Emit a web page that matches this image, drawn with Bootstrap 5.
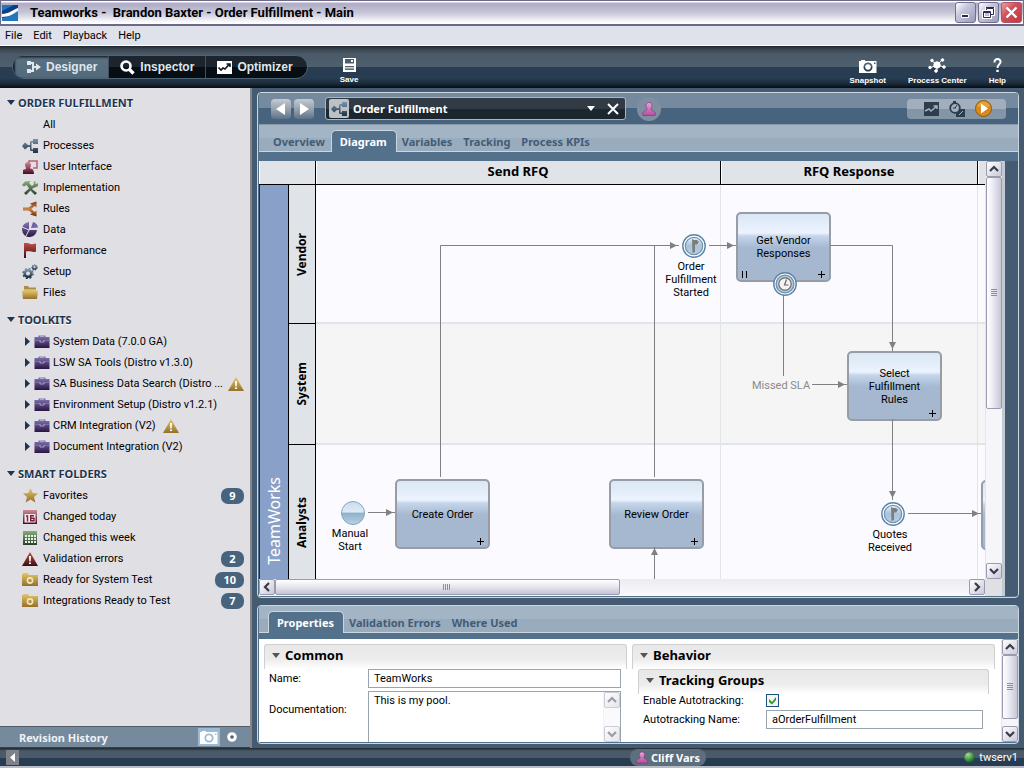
<!DOCTYPE html>
<html lang="en">
<head>
<meta charset="utf-8">
<meta name="viewport" content="width=device-width, initial-scale=1">
<title>Teamworks - Order Fulfillment</title>
<link rel="stylesheet" href="https://cdn.jsdelivr.net/npm/bootstrap@5.3.0/dist/css/bootstrap.min.css">
<style>
  :root { --ui: Roboto, "Liberation Sans", sans-serif; --strong: "Noto Sans", "Open Sans", sans-serif; --frame: #455b71; --line: #ccd6de; }
  body { font: 11px/13px var(--ui); color: #000; background: var(--frame); }
  a { color: inherit; text-decoration: none; }
  button { border: 0; padding: 0; background: none; color: inherit; }
  svg { display: block; flex: none; }
  .strong { font-family: var(--strong); font-weight: 700; }
  .fit-y { min-height: 0; }
  .fit-x { min-width: 0; }

  /* window frame */
  .titlebar { height: 26px; padding: 0 1px; border: solid #6d6a88; border-width: 1px 1px 2px 1px; background: linear-gradient(#fff 0, #fff 1px, #b0aec6 2px, #b4b2ca 5px, #c9c8d8 12px, #f4f4f8 20px, #fff 22px); }
  .titlebar h1 { font: 700 13px/20px Roboto, "Noto Sans", sans-serif; white-space: pre; }
  .winbtns { gap: 2px; }
  .winbtn { width: 21px; height: 21px; border: 1px solid #70708e; border-radius: 3px; background: linear-gradient(135deg, #fff, #c5c5da 40%, #9c9cbc); display: grid; place-items: center; }
  .winbtn.shut { border-color: #b05468; background: linear-gradient(135deg, #eaa0a0, #d05258 40%, #c0393f); }
  .menubar { height: 20px; padding: 0 5px; gap: 11px; background: #dfe1eb; border-bottom: 1px solid #fff; }

  /* toolbar */
  .toolbar { height: 42px; padding: 0 10px 0 12px; color: #fff; background: linear-gradient(#1f272d 0, #39444d 3px, #4a5a68 8px, #4e5f6d 21px, #283d51 21px, #283d51 32px, #1a2938 38px, #060b10 42px); }
  .modes { height: 24px; border: 1px solid #4d6273; border-radius: 12px; overflow: hidden; background: linear-gradient(#1c252e 50%, #060d13 50%); }
  .modes button { font: 700 12px/22px "Liberation Sans", sans-serif; height: 22px; padding: 0 11px; gap: 5px; color: #dfe6ec; border-right: 1px solid #43515e; }
  .modes button:last-child { border: 0; padding-right: 14px; }
  .modes .on { background: linear-gradient(#40515f, #5a7080 4px, #526a7b); padding-left: 14px; box-shadow: inset 2px 1px 2px #16202a; }
  .tool { font: 700 8px/9px "Liberation Sans", sans-serif; gap: 3px; }
  .tools { gap: 6px; }

  /* library tree */
  .library { width: 252px; background: #e0dfe4; border-right: 2px solid #86868a; }
  .tree { padding-top: 4px; }
  .library h2 { font: 700 11px/21px var(--strong); color: #1d3550; text-shadow: 0 1px 0 #fff; margin: 0 0 1px; padding-left: 7px; gap: 3px; }
  .library section + section { margin-top: 6px; }
  .library li { height: 21px; padding: 0 6px 0 22px; gap: 5px; white-space: nowrap; }
  .library li.kit { padding-left: 25px; gap: 3px; }
  .count { margin-left: auto; min-width: 23px; height: 16px; padding: 0 8px; border-radius: 7px; background: #48637e; color: #fff; font: 700 11px/15px var(--strong); text-align: center; }
  .history { height: 22px; padding: 0 12px 0 19px; color: #eef2f6; background: #768a9d; border-top: 1px solid #4f5a66; border-bottom: 1px solid #34404c; gap: 6px; }
  .history .cam { width: 22px; height: 18px; background: #9cbad2; display: grid; place-items: center; }

  /* panels */
  .work { padding: 4px 5px; gap: 7px; }
  .pane { border: 1px solid var(--line); border-radius: 4px; overflow: hidden; background: #53718b; padding: 0 0 1px 1px; }
  .panehead { height: 32px; padding: 0 12px; background: linear-gradient(#768a9f 15px, #48637e 15px); border-bottom: 1px solid #8798a8; gap: 11px; }
  .steps { gap: 3px; }
  .step { width: 20px; height: 20px; border-radius: 4px; background: linear-gradient(#c4cbd2, #8c9aa8 60%, #5c7288); display: grid; place-items: center; }
  .picker { width: 301px; height: 23px; padding: 0 6px 0 3px; border: 1px solid #aab5be; border-radius: 3px; color: #fff; background: linear-gradient(#313b45 50%, #1c262f 50%); gap: 4px; }
  .picker .kind { width: 20px; height: 19px; background: #bcc1c6; border-radius: 2px; display: grid; place-items: center; }
  .who { width: 24px; height: 24px; border-radius: 12px; background: #7f8fa1; display: grid; place-items: center; }
  .views { height: 20px; padding: 0 14px 0 17px; border-radius: 4px; background: linear-gradient(#a2aebb 50%, #8396a8 50%); gap: 10px; }
  .tabstrip { height: 27px; padding: 0 9px; background: linear-gradient(#a3b4c4 50%, #99acbe 50%); border-bottom: 1px solid var(--line); }
  .tabstrip a { height: 21px; padding: 0 6px 0 5px; font: 700 11px/23px var(--strong); color: #435c75; }
  .tabstrip a.active { height: 22px; margin-bottom: -1px; padding: 0 9px 0 8px; line-height: 22px; color: #fff; background: #53718b; border: 1px solid var(--line); border-bottom: 0; border-radius: 5px 5px 0 0; }

  /* scroll bars */
  .vbar { width: 17px; background: #f6f6fa; border-left: 1px solid #e4e4ee; }
  .hbar { height: 17px; background: linear-gradient(#ececf0, #fafafe); }
  .cap { width: 16px; height: 16px; border: 1px solid #9a9ab0; border-radius: 2px; background: linear-gradient(135deg, #fff, #c9c9da); display: grid; place-items: center; flex: none; }
  .thumb { border: 1px solid #9a9ab0; border-radius: 2px; display: grid; place-items: center; }
  .vbar .thumb { width: 16px; background: linear-gradient(90deg, #fff, #ececf4 40%, #c6c6d6); }
  .hbar .thumb { height: 16px; background: linear-gradient(#fff, #e6e6ef 50%, #c4c4d4); }
  .corner { padding-bottom: 17px; background: #e0dfe4; }
  .gutter { width: 16px; border-left: 3px solid #c3cad2; background: var(--frame); }
  .viewport { padding-top: 9px; }

  /* process diagram */
  .canvas { background: #fafaff; }
  .lanes { display: grid; grid-template: 24px 139px 121px 1fr / 30px 27px 405px 257px 1fr; height: 100%; }
  .phase { background: #e0e3e8; border-right: 1px solid #000; border-bottom: 1px solid #000; box-shadow: inset 1px 0 0 #fff; font: 700 13px/20px var(--strong); text-align: center; }
  .phase.blank { grid-column: span 2; }
  .pool { grid-row: span 3; background: #89a1c8; border-right: 1px solid #000; box-shadow: inset 1px 0 0 #1414e0; color: #fff; font: 16px/28px var(--strong); padding-bottom: 14px; }
  .pool span, .lane span { writing-mode: vertical-rl; transform: rotate(180deg); }
  .lane { background: #e0e3e8; border-right: 1px solid #000; border-bottom: 1px solid #000; font: 700 12px/26px var(--strong); }
  .cell { border-right: 1px solid #e0e5ea; border-bottom: 2px solid #e0e5ea; }
  .alt { background: #f5f5f5; }
  .last { border-bottom: 0; }
  .lane.last { padding-top: 20px; }
  .task, .event, .note { position: absolute; }
  .task { width: 95px; height: 70px; border: 2px solid #979ca5; border-radius: 5px; background: linear-gradient(#dbe7f5, #ebf3fe 19px, #c6d6ea 22px, #afc2da 30px, #a5b8d0 34px); text-align: center; padding: 0 10px; }
  .task .plus { position: absolute; right: 4px; bottom: 2px; }
  .task .par { position: absolute; left: 3px; bottom: 2px; }
  .note { width: 80px; text-align: center; }
  .note.dim { color: #8a8a8a; }

  /* properties */
  .props { height: 103px; margin-top: 6px; background: #fff; }
  .sheet { gap: 5px; padding: 5px 6px 0 5px; }
  .half { flex: 1 1 0; min-width: 0; }
  .grp { height: 25px; padding: 0 0 4px 7px; gap: 5px; margin: 0; background: linear-gradient(#e8e8e8 0, #ececec 14px, #fff); border: 1px solid #d0d0d0; border-bottom: 0; border-radius: 3px 3px 0 0; font: 700 13px/20px var(--strong); }
  .grp svg { color: #555; }
  .line { padding: 0 6px 3px 5px; }
  .half .line label { width: 99px; }
  .half .sub .line label { width: 123px; }
  .sub { padding: 0 6px; }
  .field { height: 19px; border: 1px solid #9aa4ae; border-radius: 0; background: #fff; font: 11px/13px var(--ui); color: #000; padding: 2px 5px; }
  .memo { height: 60px; border: 1px solid #9aa4ae; }
  .memo .field { height: 58px; border: 0; resize: none; }
  .memo .vbar { height: 50px; opacity: .5; }
  .tick { appearance: none; width: 13px; height: 13px; margin: 0; border: 1px solid #1c5180; background: #f4f4f0 url("data:image/svg+xml,%3Csvg xmlns='http://www.w3.org/2000/svg' viewBox='0 0 11 11'%3E%3Cpath d='M2 4l3 3 4-5v3L5 9.500 2 7z' fill='%2321a121'/%3E%3C/svg%3E"); }

  /* status */
  .status { height: 20px; padding: 0 6px; color: #fff; background: linear-gradient(#1e2830 0, #4a5a68 3px, #4a5a68 10px, #273c50 10px); border-bottom: 2px solid #b8bcc8; }
  .status .from { flex: 2 1 0; }
  .status .to { flex: 1 1 0; }
  .status .fold { background: #7c8287; padding: 3px 4px; }
  .status .user { height: 17px; padding: 0 6px; border-radius: 8px; background: #5d6e7d; gap: 3px; }
</style>
</head>
<body class="vh-100 d-flex flex-column overflow-hidden">

<svg width="0" height="0" class="position-absolute" aria-hidden="true">
  <defs>
    <linearGradient id="gSteel" x1="0" y1="0" x2="0" y2="1"><stop offset="0" stop-color="#7c93a8"/><stop offset="1" stop-color="#1f3346"/></linearGradient>
    <linearGradient id="gWine" x1="0" y1="0" x2="0" y2="1"><stop offset="0" stop-color="#cf8a96"/><stop offset="1" stop-color="#4a0a24"/></linearGradient>
    <linearGradient id="gGreen" x1="0" y1="0" x2="0" y2="1"><stop offset="0" stop-color="#86b078"/><stop offset="1" stop-color="#253f2c"/></linearGradient>
    <linearGradient id="gRust" x1="0" y1="0" x2="0" y2="1"><stop offset="0" stop-color="#7a3a14"/><stop offset=".5" stop-color="#cf8442"/><stop offset="1" stop-color="#6a2c0c"/></linearGradient>
    <linearGradient id="gViolet" x1="0" y1="0" x2="0" y2="1"><stop offset="0" stop-color="#8478b4"/><stop offset="1" stop-color="#2a1444"/></linearGradient>
    <linearGradient id="gRed" x1="0" y1="0" x2="0" y2="1"><stop offset="0" stop-color="#c0504a"/><stop offset="1" stop-color="#3e0e10"/></linearGradient>
    <linearGradient id="gGold" x1="0" y1="0" x2="0" y2="1"><stop offset="0" stop-color="#e4c66a"/><stop offset="1" stop-color="#94702c"/></linearGradient>
    <linearGradient id="gPink" x1="0" y1="0" x2="0" y2="1"><stop offset="0" stop-color="#f0a0d8"/><stop offset="1" stop-color="#b0509c"/></linearGradient>
    <linearGradient id="gBall" x1="0" y1="0" x2="0" y2="1"><stop offset="0" stop-color="#c8dcec"/><stop offset=".45" stop-color="#dfeaf6"/><stop offset=".52" stop-color="#8fb2cc"/><stop offset="1" stop-color="#bcd2e4"/></linearGradient>
    <linearGradient id="gRing" x1="0" y1="0" x2="0" y2="1"><stop offset="0" stop-color="#e6eff8"/><stop offset=".5" stop-color="#a9c3d9"/><stop offset="1" stop-color="#b9cfe2"/></linearGradient>
    <radialGradient id="gOrb" cx=".35" cy=".25" r=".8"><stop offset="0" stop-color="#a8dc90"/><stop offset=".6" stop-color="#3f9440"/><stop offset="1" stop-color="#1b4d22"/></radialGradient>
    <symbol id="i-proc" viewBox="0 0 16 14"><path fill="url(#gSteel)" d="M0 7l3-3.500L6 6h2V3.500Q8 2 9.500 2H11V0h5v5h-5V3.500H9.500v7H11V9h5v5h-5v-2H9.500Q8 12 8 10.500V8H6l-3 2.500z"/></symbol>
    <symbol id="i-flow" viewBox="0 0 14 12"><path fill="currentColor" d="M0 0h4v1h3v4h2V2.500L14 6 9 9.500V7H7v4H4v1H0V8h4v1h1V3H4v1H0z"/></symbol>
    <symbol id="i-cam" viewBox="0 0 18 13"><path fill="currentColor" fill-rule="evenodd" d="M0 1h2V0h4v1h11.500v12H0zM9 2.500a4.500 4.500 0 1 0 .01 0zM9 4.200a2.800 2.800 0 1 1-.01 0zM15 2.500h1.500V4H15z"/></symbol>
    <symbol id="i-user" viewBox="0 0 14 14"><path fill="url(#gPink)" stroke="#7c3470" stroke-width=".6" d="M7 .5c2 0 3 1.500 3 3.200C10 5.500 9 6 9 7.500c0 1 4 1 4.500 4.500L13 13.500H1L.5 12C1 8.500 5 8.500 5 7.500 5 6 4 5.500 4 3.700 4 2 5 .5 7 .5z"/></symbol>
    <symbol id="i-kit" viewBox="0 0 15 13"><path fill="url(#gViolet)" fill-rule="evenodd" d="M4 2V.5h7V2h4v11H0V2zM5.500 2h4v-.6h-4z"/><path d="M0 5.500h6m3 0h6" stroke="#8d82b8" stroke-width=".6"/><path d="M5.500 5v2h4V5" fill="none" stroke="#b9aed4" stroke-width=".8"/></symbol>
    <symbol id="i-tri" viewBox="0 0 6 9"><path fill="#1d3550" d="M0 0v9l5-4.500z"/></symbol>
    <symbol id="i-plus" viewBox="0 0 7 7"><path stroke="#000" d="M0 3.500h7M3.500 0v7"/></symbol>
    <symbol id="i-warn" viewBox="0 0 16 14"><path d="M8 0l8 14H0z"/><path fill="#fff" d="M7 4h2l-.3 5.500H7.300zM7 10.500h2V12H7z"/></symbol>
    <symbol id="i-folder" viewBox="0 0 16 13"><path fill="url(#gGold)" d="M0 1h1V0h5l1 2h9v11H0z"/><circle cx="8" cy="7.500" r="2.600" fill="none" stroke="#f2e6b4" stroke-width="1.600"/></symbol>
    <symbol id="i-left" viewBox="0 0 10 12"><path fill="currentColor" d="M9 0v12L0 6z"/></symbol>
    <symbol id="i-right" viewBox="0 0 10 12"><path fill="currentColor" d="M1 0v12l9-6z"/></symbol>
    <symbol id="i-down" viewBox="0 0 8 5"><path fill="currentColor" d="M0 0h8L4 5z"/></symbol>
    <symbol id="c-up" viewBox="0 0 10 10"><path d="M1 7l4-4 4 4" fill="none" stroke="#3a3a48" stroke-width="2.200"/></symbol>
    <symbol id="c-dn" viewBox="0 0 10 10"><path d="M1 3l4 4 4-4" fill="none" stroke="#3a3a48" stroke-width="2.200"/></symbol>
    <symbol id="c-lt" viewBox="0 0 10 10"><path d="M7 1L3 5l4 4" fill="none" stroke="#3a3a48" stroke-width="2.200"/></symbol>
    <symbol id="c-rt" viewBox="0 0 10 10"><path d="M3 1l4 4-4 4" fill="none" stroke="#3a3a48" stroke-width="2.200"/></symbol>
    <symbol id="e-msg" viewBox="0 0 24 24"><circle cx="12" cy="12" r="11.200" fill="#fff" stroke="#5d84a6" stroke-width="1.400"/><circle cx="12" cy="12" r="8.700" fill="url(#gRing)" stroke="#6f94b4" stroke-width="1.200"/><path fill="#7d7d7d" d="M10 5l2 1h3l2 2-2 2.500h-2V18l-2.500 1z"/></symbol>
    <symbol id="e-time" viewBox="0 0 24 24"><circle cx="12" cy="12" r="11.200" fill="#fff" stroke="#5d84a6" stroke-width="1.400"/><circle cx="12" cy="12" r="8.800" fill="#c4d8ea" stroke="#6f94b4" stroke-width="1.600"/><circle cx="12" cy="12" r="6.200" fill="#f4f4f4" stroke="#777" stroke-width="1.400"/><path d="M13.500 7.500L11.500 13H15.500" fill="none" stroke="#666" stroke-width="1.200"/></symbol>
  </defs>
</svg>

<header class="flex-shrink-0">
  <div class="titlebar d-flex align-items-center">
    <svg width="16" height="16" viewBox="0 0 16 16"><path fill="#0a3f86" d="M0 0h16v16H0z"/><path fill="#2f8fd0" d="M0 0h12L0 6zM0 16V13C6 12 11 9 16 5v11z" opacity=".7"/><path fill="#fff" d="M0 9C6 9 11 5 16 3v3c-5 3-9 6-16 6z"/></svg>
    <h1 class="m-0 ms-2 ps-1 me-auto">Teamworks -  Brandon Baxter - Order Fulfillment - Main</h1>
    <div class="winbtns d-flex">
      <button class="winbtn" aria-label="Minimize"><svg width="13" height="13"><path fill="#2c2c50" stroke="#fff" d="M2.500 8.500h7v3h-7z"/></svg></button>
      <button class="winbtn" aria-label="Restore"><svg width="13" height="13" fill="none"><path stroke="#fff" stroke-width="3" d="M4.500 5V2.500h7v6H9M1.500 5.500h7v6h-7z"/><path stroke="#2c2c50" d="M4.500 4V2.500h7v6H9M4 1.500h8M1.500 5.500h7v6h-7zM1 6.500h8"/></svg></button>
      <button class="winbtn shut" aria-label="Close"><svg width="13" height="13"><path stroke="#fff" stroke-width="2.400" d="M1.500 1.500l10 10M11.500 1.500l-10 10"/></svg></button>
    </div>
  </div>
  <nav class="menubar d-flex align-items-center">
    <a href="#">File</a><a href="#">Edit</a><a href="#">Playback</a><a href="#">Help</a>
  </nav>
  <div class="toolbar d-flex align-items-center">
    <div class="modes d-flex">
      <button class="on d-flex align-items-center"><svg width="14" height="12"><use href="#i-flow"/></svg>Designer</button>
      <button class="d-flex align-items-center"><svg width="15" height="15" viewBox="0 0 15 15" fill="none" stroke="#fff"><circle cx="6" cy="6" r="4.500" stroke-width="2.600"/><path d="M9.500 9.500l4 4" stroke-width="3.400"/></svg>Inspector</button>
      <button class="d-flex align-items-center"><svg width="15" height="13" viewBox="0 0 15 13"><path fill="#fff" d="M0 0h15v13H0z"/><path fill="none" stroke="#101820" stroke-width="1.600" d="M1.500 6.500L4 9l2-2 2 1 4.500-5M9.500 3H13v3"/></svg>Optimizer</button>
    </div>
    <button class="tool d-flex flex-column align-items-center ms-4 px-2 pt-2"><svg width="13" height="14" viewBox="0 0 13 14"><path fill="#fff" fill-rule="evenodd" d="M0 0h13v14H0zM2 1v4.500h9V1zM2 8v1.200h9V8zM2 10.500v1.200h9v-1.200z"/><path fill="#fff" d="M8 2h2v2H8z"/></svg>Save</button>
    <div class="tools d-flex ms-auto pt-2">
      <button class="tool d-flex flex-column align-items-center justify-content-end px-2"><svg width="18" height="13"><use href="#i-cam"/></svg>Snapshot</button>
      <button class="tool d-flex flex-column align-items-center justify-content-end px-2"><svg width="18" height="15" viewBox="0 0 18 15" fill="#fff" stroke="#fff"><path d="M9 7L4 3M9 7l5-5M9 7l7 2M9 7L2 10M9 7v6" stroke-width="1"/><circle cx="9" cy="7" r="3.200"/><circle cx="4" cy="2.500" r="1.300"/><circle cx="14.500" cy="2" r="1.300"/><circle cx="16" cy="9" r="1.300"/><circle cx="2" cy="9.500" r="1.300"/><circle cx="8" cy="13" r="1.300"/></svg>Process Center</button>
      <button class="tool d-flex flex-column align-items-center justify-content-end px-2"><svg width="9" height="15" viewBox="0 0 9 15"><path fill="none" stroke="#fff" stroke-width="2" d="M1.500 4.500C1 0 8 0 7.500 4c0 2-3 2.500-3 6"/><path fill="#fff" d="M3.300 11.800h2.400V14H3.300z"/></svg>Help</button>
    </div>
  </div>
</header>

<div class="d-flex flex-grow-1 fit-y">
  <aside class="library d-flex flex-column flex-shrink-0">
    <div class="tree flex-grow-1 overflow-hidden">
      <section>
        <h2 class="d-flex align-items-center"><svg width="8" height="5"><use href="#i-down"/></svg>ORDER FULFILLMENT</h2>
        <ul class="list-unstyled m-0">
          <li class="d-flex align-items-center"><svg width="16" height="14"></svg><a href="#">All</a></li>
          <li class="d-flex align-items-center"><svg width="16" height="14"><use href="#i-proc"/></svg><a href="#">Processes</a></li>
          <li class="d-flex align-items-center"><svg width="16" height="14" viewBox="0 0 16 14"><path fill="none" stroke="#b86472" stroke-width="1.600" d="M7 3V1h8v7h-4"/><path fill="url(#gWine)" d="M6 2c2 0 3 1.500 3 3S8 7.500 8 8.500c2 0 4 1 4 5.500H1V10c1-1 3-.8 3-1.500S3 6.500 3 5s1-3 3-3z"/></svg><a href="#">User Interface</a></li>
          <li class="d-flex align-items-center"><svg width="16" height="14" viewBox="0 0 16 14"><path fill="url(#gGreen)" d="M0 4l3-3.500 6-.5L7 1.500l1.500 2L10 5l2-2-.5-2L14 0l-1 2 1.200 1L16 2v3l-3 1.500-1.500.2L10 8l5 4-2 2-4.500-4.500L4 14l-2-2 5-4.500L4.500 4 2 5.500z"/></svg><a href="#">Implementation</a></li>
          <li class="d-flex align-items-center"><svg width="16" height="16" viewBox="0 0 16 16"><path fill="url(#gRust)" d="M1 6.500h5.500L10 4 8 2.500 14.500.5v6L12.500 5 9.500 8l3 3 2-1.500v6L8 13.500 10 12 6.500 9.500H1z"/></svg><a href="#">Rules</a></li>
          <li class="d-flex align-items-center"><svg width="16" height="15" viewBox="0 0 16 15"><path fill="url(#gViolet)" d="M7 7.500V0a7.500 7.500 0 1 0 8 7H8z"/><path fill="#6c62a4" d="M9 6l2-6a7 7 0 0 1 5 5.500z"/><path stroke="#e0dfe4" fill="none" d="M0 5l7 3 2-8M7 8l-3 6M7 7.500h9"/></svg><a href="#">Data</a></li>
          <li class="d-flex align-items-center"><svg width="16" height="15" viewBox="0 0 16 15"><path fill="url(#gRed)" d="M2 0h2c3-.5 4 2 7 1l3-.5v8c-3 1.500-6-1-10 0V15H2z"/></svg><a href="#">Performance</a></li>
          <li class="d-flex align-items-center"><svg width="16" height="15" viewBox="0 0 16 15" fill="none" stroke="url(#gSteel)"><circle cx="6" cy="9.500" r="3.300" stroke-width="2.600"/><circle cx="6" cy="9.500" r="4.900" stroke-width="1.600" stroke-dasharray="2 1.850"/><circle cx="12.500" cy="3.300" r="1.800" stroke-width="1.500"/><circle cx="12.500" cy="3.300" r="2.800" stroke-dasharray="1.300 1.200"/></svg><a href="#">Setup</a></li>
          <li class="d-flex align-items-center"><svg width="16" height="13" viewBox="0 0 16 13"><path fill="#ad8c42" d="M2 4V0h4l1 1.500h7V5H2z"/><path fill="#efe0a4" d="M1 3.500h14v1H1z"/><path fill="url(#gGold)" d="M0 4.500h16L15 13H1z"/></svg><a href="#">Files</a></li>
        </ul>
      </section>
      <section>
        <h2 class="d-flex align-items-center"><svg width="8" height="5"><use href="#i-down"/></svg>TOOLKITS</h2>
        <ul class="list-unstyled m-0">
          <li class="kit d-flex align-items-center"><svg width="6" height="9"><use href="#i-tri"/></svg><svg width="16" height="13"><use href="#i-kit"/></svg><a href="#">System Data (7.0.0 GA)</a></li>
          <li class="kit d-flex align-items-center"><svg width="6" height="9"><use href="#i-tri"/></svg><svg width="16" height="13"><use href="#i-kit"/></svg><a href="#">LSW SA Tools (Distro v1.3.0)</a></li>
          <li class="kit d-flex align-items-center"><svg width="6" height="9"><use href="#i-tri"/></svg><svg width="16" height="13"><use href="#i-kit"/></svg><a href="#">SA Business Data Search (Distro ...</a><svg class="ms-auto" width="16" height="14" fill="url(#gGold)"><use href="#i-warn"/></svg></li>
          <li class="kit d-flex align-items-center"><svg width="6" height="9"><use href="#i-tri"/></svg><svg width="16" height="13"><use href="#i-kit"/></svg><a href="#">Environment Setup (Distro v1.2.1)</a></li>
          <li class="kit d-flex align-items-center"><svg width="6" height="9"><use href="#i-tri"/></svg><svg width="16" height="13"><use href="#i-kit"/></svg><a href="#">CRM Integration (V2)</a><svg class="ms-1" width="16" height="14" fill="url(#gGold)"><use href="#i-warn"/></svg></li>
          <li class="kit d-flex align-items-center"><svg width="6" height="9"><use href="#i-tri"/></svg><svg width="16" height="13"><use href="#i-kit"/></svg><a href="#">Document Integration (V2)</a></li>
        </ul>
      </section>
      <section>
        <h2 class="d-flex align-items-center"><svg width="8" height="5"><use href="#i-down"/></svg>SMART FOLDERS</h2>
        <ul class="list-unstyled m-0">
          <li class="d-flex align-items-center"><svg width="16" height="15" viewBox="0 0 16 15"><path fill="url(#gGold)" d="M8.500 0l2.200 5 5.300.5-4 3.500 1.300 5.500-4.800-3-4.800 3L5 9 1 5.500 6.300 5z"/></svg><a href="#">Favorites</a><span class="count">9</span></li>
          <li class="d-flex align-items-center"><svg width="16" height="14" viewBox="0 0 16 14"><path fill="url(#gWine)" d="M1 0h14v14H1z"/><path fill="#f0e8ea" d="M2.500 4h11v8.500h-11z"/><path fill="none" stroke="#7a2038" stroke-width="1.400" d="M4 6h1.500v5.500M12 5.700H8.700v5H12V8.200H8.700"/></svg><a href="#">Changed today</a></li>
          <li class="d-flex align-items-center"><svg width="16" height="14" viewBox="0 0 16 14"><path fill="url(#gGreen)" d="M1 0h14v14H1z"/><path stroke="#e8f0e4" stroke-width="1.800" stroke-dasharray="2 1" d="M3 5h11M3 8h11M3 11h11"/></svg><a href="#">Changed this week</a></li>
          <li class="d-flex align-items-center"><svg width="16" height="14" fill="url(#gRed)"><use href="#i-warn"/></svg><a href="#">Validation errors</a><span class="count">2</span></li>
          <li class="d-flex align-items-center"><svg width="16" height="13"><use href="#i-folder"/></svg><a href="#">Ready for System Test</a><span class="count">10</span></li>
          <li class="d-flex align-items-center"><svg width="16" height="13"><use href="#i-folder"/></svg><a href="#">Integrations Ready to Test</a><span class="count">7</span></li>
        </ul>
      </section>
    </div>
    <div class="history strong d-flex align-items-center">
      <span class="me-auto">Revision History</span>
      <button class="cam text-white" aria-label="Snapshot"><svg width="18" height="13"><use href="#i-cam"/></svg></button>
      <button aria-label="Record"><svg width="12" height="12" viewBox="0 0 12 12"><circle cx="6" cy="6" r="3.300" fill="#5a5570" stroke="#fff" stroke-width="3"/></svg></button>
    </div>
  </aside>

  <main class="work d-flex flex-column flex-grow-1 fit-x">
    <section class="pane d-flex flex-column flex-grow-1 fit-y">
      <div class="panehead d-flex align-items-center">
        <div class="steps d-flex text-white">
          <button class="step" aria-label="Back"><svg width="10" height="12"><use href="#i-left"/></svg></button>
          <button class="step" aria-label="Forward"><svg width="10" height="12"><use href="#i-right"/></svg></button>
        </div>
        <div class="picker strong d-flex align-items-center">
          <span class="kind"><svg width="16" height="14"><use href="#i-proc"/></svg></span>
          <span class="me-auto">Order Fulfillment</span>
          <button aria-label="Open list"><svg width="8" height="5"><use href="#i-down"/></svg></button>
          <button class="ms-2" aria-label="Close"><svg width="12" height="12"><path stroke="#fff" stroke-width="2" d="M1 1l10 10M11 1L1 11"/></svg></button>
        </div>
        <span class="who"><svg width="14" height="14"><use href="#i-user"/></svg></span>
        <div class="views d-flex align-items-center ms-auto">
          <button aria-label="Chart"><svg width="15" height="14" viewBox="0 0 15 14"><path fill="#2c3d4e" d="M0 0h15v14H0z"/><path fill="none" stroke="#a4b2c0" stroke-width="1.500" d="M1 9l4-2 2 2 6-5M9.500 4H13v3"/></svg></button>
          <button aria-label="Timing"><svg width="16" height="16" viewBox="0 0 16 16"><path fill="#2c3d4e" d="M7 8h9v8H7zM4 0h3v3H4z"/><circle cx="6" cy="7" r="4.800" fill="#a3b0bc" stroke="#2c3d4e" stroke-width="1.800"/><path stroke="#2c3d4e" d="M6 7l2-3M4 7h3"/><path stroke="#a4b2c0" d="M10 14l4-4"/></svg></button>
          <button aria-label="Run"><svg width="17" height="17" viewBox="0 0 17 17"><circle cx="8.500" cy="8.500" r="8" fill="#d98a1e" stroke="#8c5a14"/><path fill="#f0b04c" d="M2 6c2-6 11-6 13 0-4 2-9 2-13 0z" opacity=".6"/><path fill="#fff" d="M6 3.500v10l7-5z"/></svg></button>
        </div>
      </div>
      <nav class="tabstrip d-flex align-items-end">
        <a href="#">Overview</a><a href="#" class="active">Diagram</a><a href="#">Variables</a><a href="#">Tracking</a><a href="#">Process KPIs</a>
      </nav>
      <div class="viewport d-flex flex-grow-1 fit-y">
        <div class="d-flex flex-column flex-grow-1 fit-x">
          <div class="canvas position-relative overflow-hidden flex-grow-1">
            <div class="lanes">
              <div class="phase blank"></div><div class="phase">Send RFQ</div><div class="phase">RFQ Response</div><div class="phase border-end-0"></div>
              <div class="pool d-flex align-items-end justify-content-center"><span>TeamWorks</span></div>
              <div class="lane d-flex align-items-center justify-content-center"><span>Vendor</span></div><div class="cell"></div><div class="cell"></div><div class="cell border-end-0"></div>
              <div class="lane d-flex align-items-center justify-content-center"><span>System</span></div><div class="cell alt"></div><div class="cell alt"></div><div class="cell alt border-end-0"></div>
              <div class="lane last d-flex align-items-center justify-content-center"><span>Analysts</span></div><div class="cell last"></div><div class="cell last"></div><div class="cell last border-end-0"></div>
            </div>
            <div class="task d-flex align-items-center justify-content-center" style="left:136px;top:318px">Create Order<span class="plus"><svg width="7" height="7"><use href="#i-plus"/></svg></span></div>
            <div class="task d-flex align-items-center justify-content-center" style="left:350px;top:318px">Review Order<span class="plus"><svg width="7" height="7"><use href="#i-plus"/></svg></span></div>
            <div class="task d-flex align-items-center justify-content-center" style="left:477px;top:51px">Get Vendor Responses<span class="par"><svg width="7" height="7"><path stroke="#000" d="M1.500 0v7M5.500 0v7"/></svg></span><span class="plus"><svg width="7" height="7"><use href="#i-plus"/></svg></span></div>
            <div class="task d-flex align-items-center justify-content-center" style="left:588px;top:190px">Select Fulfillment Rules<span class="plus"><svg width="7" height="7"><use href="#i-plus"/></svg></span></div>
            <div class="task" style="left:722px;top:319px"></div>
            <svg class="position-absolute top-0 start-0" width="800" height="420" fill="none">
              <path stroke="#808080" d="M181.500 316V84.500H420M395.500 84V316M395.500 420V386M450 84.500H477M571 84.500H633.500V190M524.500 134V215M553 223.500H588M633.500 258V339M649 352.500H722M109 351.500H136"/>
              <path fill="#808080" d="M411 81v7l7-3.500zM468 81v7l7-3.500zM630 181h7l-3.500 7zM579 220v7l7-3.500zM630 330h7l-3.500 7zM713 349v7l7-3.500zM127 348v7l7-3.500zM392 394h7l-3.500-7z"/>
            </svg>
            <svg class="event" style="left:423px;top:73px" width="24" height="24"><use href="#e-msg"/></svg>
            <svg class="event" style="left:514px;top:111px" width="24" height="24"><use href="#e-time"/></svg>
            <svg class="event" style="left:622px;top:341px" width="24" height="24"><use href="#e-msg"/></svg>
            <svg class="event" style="left:82px;top:340px" width="24" height="24"><circle cx="12" cy="12" r="11.500" fill="url(#gBall)" stroke="#84a6c2"/></svg>
            <div class="note" style="left:392px;top:99px">Order<br>Fulfillment<br>Started</div>
            <div class="note dim" style="left:482px;top:218px">Missed SLA</div>
            <div class="note" style="left:591px;top:367px">Quotes<br>Received</div>
            <div class="note" style="left:51px;top:366px">Manual<br>Start</div>
          </div>
          <div class="hbar d-flex">
            <button class="cap" aria-label="Scroll left"><svg width="10" height="10"><use href="#c-lt"/></svg></button>
            <div class="thumb" style="width:47.500%"><svg width="8" height="6"><path stroke="#8c8ca4" d="M.5 0v6M2.500 0v6M4.500 0v6M6.500 0v6"/></svg></div>
            <button class="cap ms-auto" aria-label="Scroll right"><svg width="10" height="10"><use href="#c-rt"/></svg></button>
          </div>
        </div>
        <div class="corner d-flex flex-column">
          <div class="vbar d-flex flex-column flex-grow-1">
            <button class="cap" aria-label="Scroll up"><svg width="10" height="10"><use href="#c-up"/></svg></button>
            <div class="thumb" style="height:55.500%"><svg width="6" height="8"><path stroke="#8c8ca4" d="M0 .5h6M0 2.500h6M0 4.500h6M0 6.500h6"/></svg></div>
            <button class="cap mt-auto" aria-label="Scroll down"><svg width="10" height="10"><use href="#c-dn"/></svg></button>
          </div>
        </div>
        <div class="gutter"></div>
      </div>
    </section>

    <section class="pane flex-shrink-0">
      <nav class="tabstrip d-flex align-items-end">
        <a href="#" class="active">Properties</a><a href="#">Validation Errors</a><a href="#">Where Used</a>
      </nav>
      <div class="props d-flex overflow-hidden">
        <form class="sheet d-flex flex-grow-1 overflow-hidden fit-x">
          <div class="half">
            <h3 class="grp d-flex align-items-center"><svg width="8" height="5"><use href="#i-down"/></svg>Common</h3>
            <div class="line d-flex align-items-center">
              <label for="poolName">Name:</label><input id="poolName" class="field flex-grow-1" value="TeamWorks">
            </div>
            <div class="line d-flex">
              <label for="poolDoc" class="pt-2 mt-1">Documentation:</label>
              <div class="memo d-flex flex-grow-1">
                <textarea id="poolDoc" class="field flex-grow-1">This is my pool.</textarea>
                <div class="vbar d-flex flex-column"><span class="cap"><svg width="10" height="10"><use href="#c-up"/></svg></span><span class="cap mt-auto"><svg width="10" height="10"><use href="#c-dn"/></svg></span></div>
              </div>
            </div>
          </div>
          <div class="half">
            <h3 class="grp d-flex align-items-center"><svg width="8" height="5"><use href="#i-down"/></svg>Behavior</h3>
            <div class="sub">
              <h4 class="grp d-flex align-items-center"><svg width="8" height="5"><use href="#i-down"/></svg>Tracking Groups</h4>
              <div class="line d-flex align-items-center">
                <label for="autoOn">Enable Autotracking:</label><input type="checkbox" id="autoOn" class="tick" checked>
              </div>
              <div class="line d-flex align-items-center">
                <label for="autoName">Autotracking Name:</label><input id="autoName" class="field flex-grow-1" value="aOrderFulfillment">
              </div>
            </div>
          </div>
        </form>
        <div class="vbar d-flex flex-column">
          <button class="cap" aria-label="Scroll up"><svg width="10" height="10"><use href="#c-up"/></svg></button>
          <div class="thumb" style="height:62%"><svg width="6" height="8"><path stroke="#8c8ca4" d="M0 .5h6M0 2.500h6M0 4.500h6M0 6.500h6"/></svg></div>
          <button class="cap mt-auto" aria-label="Scroll down"><svg width="10" height="10"><use href="#c-dn"/></svg></button>
        </div>
      </div>
    </section>
  </main>
</div>

<footer class="status d-flex align-items-center flex-shrink-0">
  <div class="from"><button class="fold d-block" aria-label="Collapse"><svg width="5" height="9" viewBox="0 0 5 9"><path fill="#fff" d="M5 0v9L0 4.500z"/></svg></button></div>
  <div class="user strong d-flex align-items-center"><svg width="12" height="13"><use href="#i-user"/></svg>Cliff Vars</div>
  <div class="to d-flex justify-content-end align-items-center gap-1"><svg width="11" height="11" viewBox="0 0 11 11"><circle cx="5.500" cy="5.500" r="5.200" fill="url(#gOrb)"/></svg>twserv1</div>
</footer>

<script src="https://cdn.jsdelivr.net/npm/bootstrap@5.3.0/dist/js/bootstrap.bundle.min.js"></script>
</body>
</html>
